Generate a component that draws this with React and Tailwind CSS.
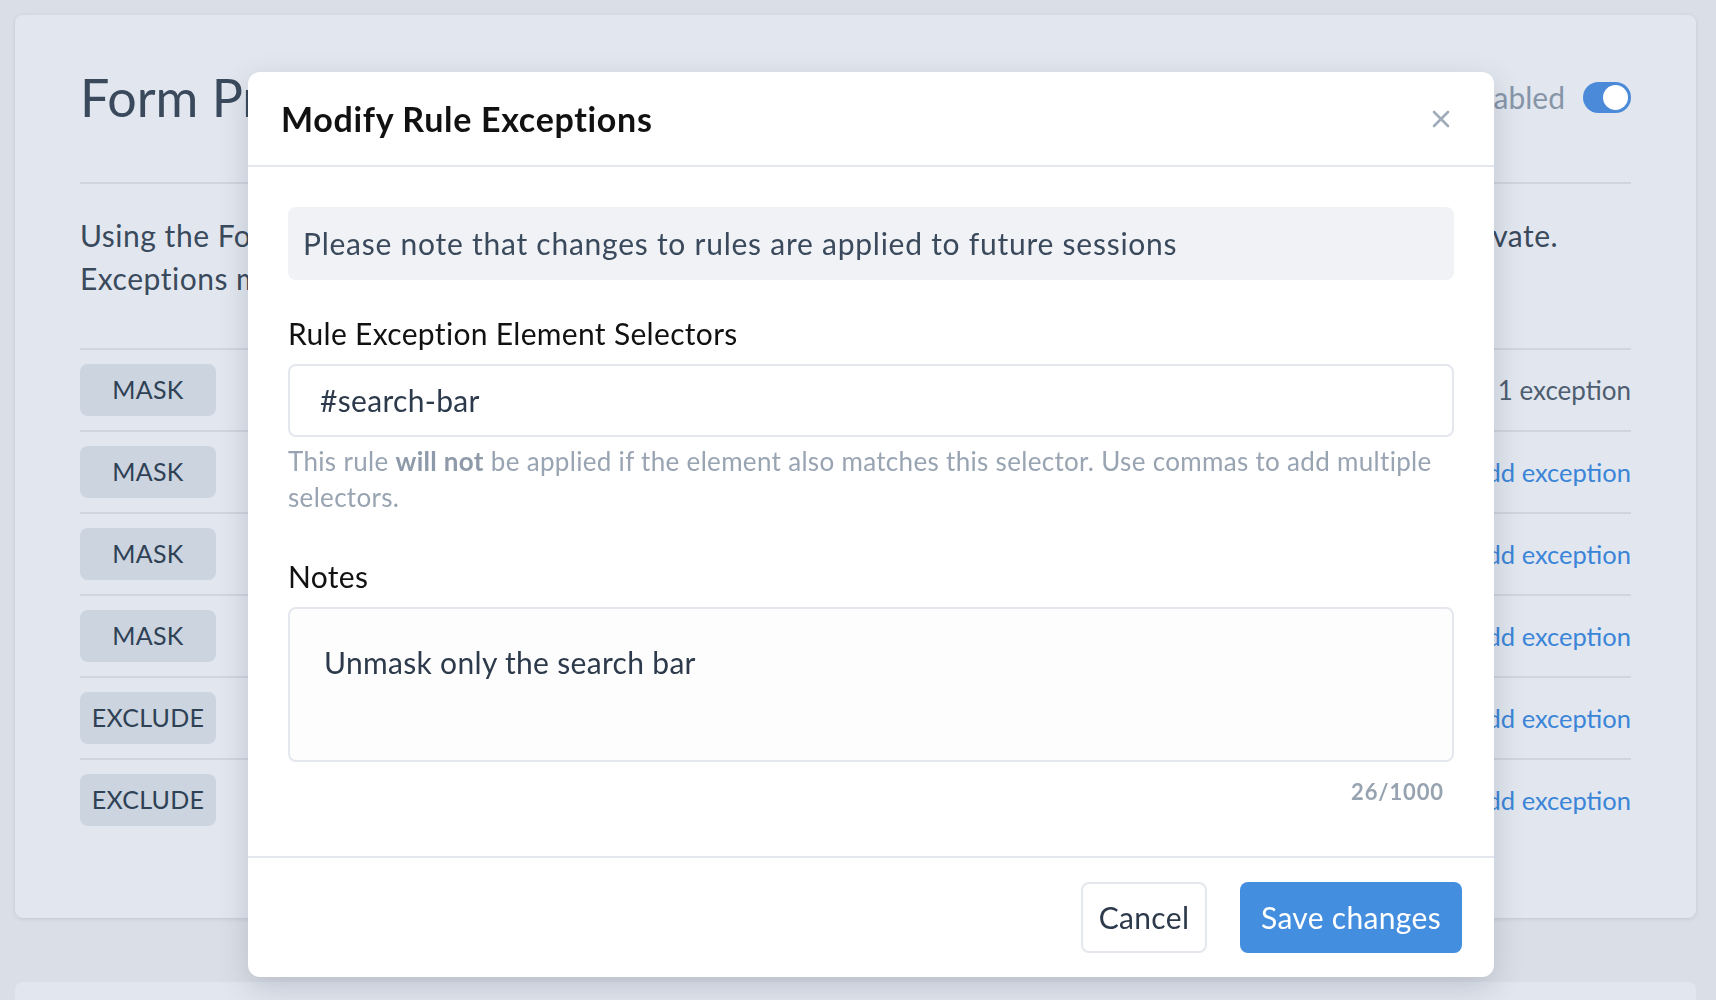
import React from 'react';

const rules = [
  { type: 'MASK', action: '1 exception', muted: true },
  { type: 'MASK', action: 'Add exception' },
  { type: 'MASK', action: 'Add exception' },
  { type: 'MASK', action: 'Add exception' },
  { type: 'EXCLUDE', action: 'Add exception' },
  { type: 'EXCLUDE', action: 'Add exception' },
];

const CloseIcon = () => (
  <svg width="18" height="18" viewBox="0 0 18 18" fill="none">
    <path d="M2 2L16 16M16 2L2 16" stroke="#a0abb9" strokeWidth="2.6" strokeLinecap="round" />
  </svg>
);

const RuleModal = () => {
  return (
    <div className="fixed inset-0 flex justify-center items-start pt-[72px]">
      <div className="ml-[26px] w-[1246px] bg-white rounded-[12px] shadow-[0_10px_30px_rgba(30,41,59,0.18)] flex flex-col">
        {/* Header */}
        <div className="h-[95px] flex items-center justify-between pl-[33px] pr-[44px] border-b-2 border-[#e4e8ee]">
          <h2 className="text-[34px] font-bold text-[#111111] leading-none tracking-[0.02em]">
            Modify Rule Exceptions
          </h2>
          <button className="p-0">
            <CloseIcon />
          </button>
        </div>

        {/* Body */}
        <div className="px-[40px] pt-[40px] pb-[50px] flex flex-col tracking-[0.02em]">
          <div className="bg-[#f0f2f5] rounded-[8px] h-[73px] flex items-center px-[15px] text-[30px] text-[#3a4a5c] tracking-[0.025em]">
            Please note that changes to rules are applied to future sessions
          </div>

          <label className="mt-[33px] text-[30px] leading-[40px] text-[#111111]">
            Rule Exception Element Selectors
          </label>
          <div className="mt-[11px] h-[73px] border-2 border-[#e4e8ee] rounded-[8px] flex items-center px-[30px] text-[30px] text-[#2d3a4b]">
            #search-bar
          </div>
          <p className="mt-[6px] text-[26px] leading-[36px] text-[#99a4b2]">
            This rule <span className="font-bold text-[#8e9aa9]">will not</span> be applied if the element also matches this selector. Use commas to add multiple selectors.
          </p>

          <label className="mt-[41px] text-[30px] leading-[40px] text-[#111111]">Notes</label>
          <div className="mt-[11px] h-[155px] border-2 border-[#e4e8ee] rounded-[8px] bg-[#fdfdfd] px-[34px] pt-[33px] text-[30px] leading-[40px] text-[#2d3a4b]">
            Unmask only the search bar
          </div>
          <div className="mt-[16px] pr-[10px] text-right text-[22px] font-bold leading-[28px] text-[#97a3b0] tracking-[0.04em]">
            26/1000
          </div>
        </div>

        {/* Footer */}
        <div className="border-t-2 border-[#e4e8ee] h-[121px] flex items-start justify-end gap-[33px] pt-[24px] pr-[32px] tracking-[0.02em]">
          <button className="h-[71px] w-[126px] border-2 border-[#e4e8ee] rounded-[8px] bg-white text-[30px] text-[#2d3a4b]">
            Cancel
          </button>
          <button className="h-[71px] w-[222px] rounded-[8px] bg-[#448ee0] text-[30px] text-white">
            Save changes
          </button>
        </div>
      </div>
    </div>
  );
};

export default function App() {
  return (
    <div
      className="relative h-[1000px] overflow-hidden bg-[#dadfe7] pt-[15px] pl-[15px] pr-[20px]"
      style={{ fontFamily: 'Lato, "Open Sans", sans-serif' }}
    >
      <div className="bg-[#e2e7ef] rounded-[8px] shadow-[0_1px_4px_rgba(100,116,139,0.2)] px-[65px] pt-[52px] pb-[78px]">
        {/* Title row */}
        <div className="flex items-center justify-between h-[117px] pb-[55px] border-b-2 border-[#cfd6df] box-border">
          <h1 className="text-[52px] leading-[62px] text-[#3a4a5c]">Form Protection</h1>
          <div className="flex items-center gap-[18px]">
            <span className="text-[30px] text-[#8795a8]">Enabled</span>
            <div className="w-[48px] h-[31px] rounded-full bg-[#4a8ad8] p-[3px] flex justify-end">
              <div className="w-[25px] h-[25px] rounded-full bg-white" />
            </div>
          </div>
        </div>

        {/* Description */}
        <div className="mt-[30px] mb-[48px] text-[30px] leading-[43px] text-[#3a4a5c] tracking-[0.017em] overflow-hidden">
          <p className="whitespace-nowrap">
            Using the Form Protection rules, you can mask or exclude all fields from recordings to keep user data private.
          </p>
          <p className="whitespace-nowrap">
            Exceptions may be added to any rule to allow specific elements to be recorded.
          </p>
        </div>

        {/* Rules list */}
        <div className="flex flex-col">
          {rules.map((rule, i) => (
            <div
              key={i}
              className="h-[82px] border-t-2 border-[#cfd6df] flex items-center justify-between"
            >
              <span className="w-[136px] h-[52px] rounded-[8px] bg-[#cbd4df] flex items-center justify-center text-[25px] tracking-[0.01em] text-[#2f4155]">
                {rule.type}
              </span>
              <span
                className={
                  rule.muted
                    ? 'text-[26px] text-[#4e5d70]'
                    : 'text-[25.5px] text-[#3b85d8]'
                }
              >
                {rule.action}
              </span>
            </div>
          ))}
        </div>
      </div>

      <div className="mt-[64px] h-[80px] bg-[#e2e7ef] rounded-[8px]" />

      <RuleModal />
    </div>
  );
}
